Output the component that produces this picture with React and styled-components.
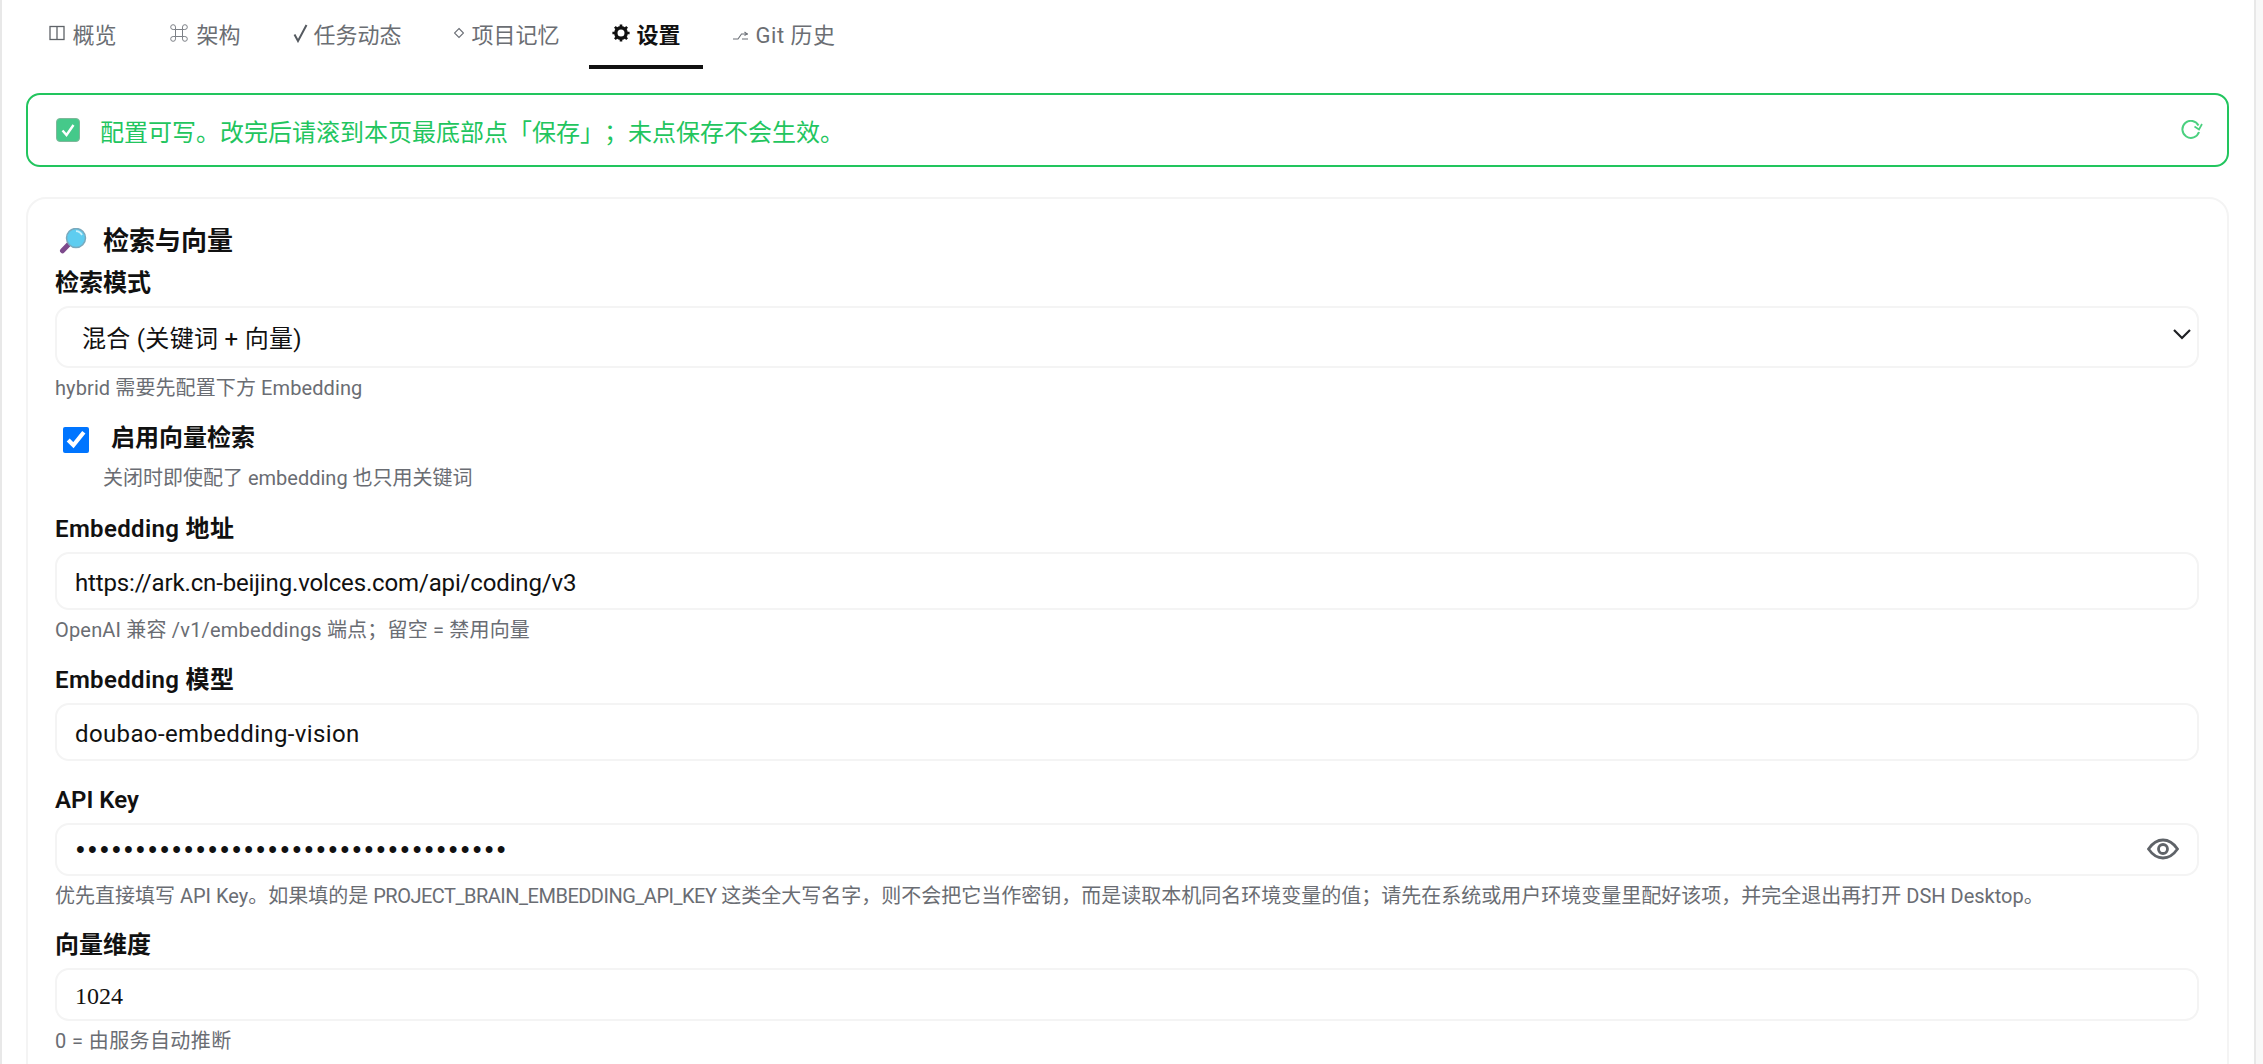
import React from 'react';
import styled, { createGlobalStyle } from 'styled-components';

const GlobalStyle = createGlobalStyle`
  html, body {
    margin: 0;
    height: 100%;
    overflow: hidden;
    background: #fff;
    font-family: Roboto, "Noto Sans CJK SC", sans-serif;
    text-spacing-trim: space-all;
    color: #111;
  }
`;

const Page = styled.div`
  display: flex;
  width: 2263px;
  height: 1064px;
  overflow: hidden;
`;

const SideEdge = styled.div`
  flex: none;
  width: 2px;
  background: #e8e8e8;
`;

const Main = styled.main`
  flex: 1;
  min-width: 0;
  padding: 0 25px 0 24px;
`;

const ScrollTrack = styled.div`
  flex: none;
  width: 9px;
  background: #f8f8f8;
  border-left: 2px solid #e8e8e8;
  box-sizing: border-box;
`;

const Tabs = styled.nav`
  display: flex;
  gap: 7px;
`;

const Tab = styled.div`
  display: flex;
  align-items: center;
  gap: ${({ $gap }) => $gap || 8}px;
  height: 69px;
  box-sizing: border-box;
  padding: 0 22.5px;
  border-bottom: 4px solid ${({ $active }) => ($active ? '#111' : 'transparent')};
  color: ${({ $active }) => ($active ? '#111' : '#6b6e73')};
  font-size: 22px;
  font-weight: ${({ $active }) => ($active ? 700 : 400)};
  letter-spacing: ${({ $track }) => $track || 0}px;
  white-space: nowrap;
`;

const Notice = styled.div`
  display: flex;
  align-items: center;
  height: 74px;
  box-sizing: border-box;
  margin-top: 24px;
  padding: 0 24px 0 28px;
  border: 2px solid #22c55e;
  border-radius: 14px;
  color: #22c55e;
  font-size: 24px;
`;

const NoticeText = styled.span`
  flex: 1;
  margin-left: 20px;
`;

const Card = styled.section`
  margin-top: 30px;
  padding: 25px 28px 40px 27px;
  border: 2px solid #f4f4f4;
  border-radius: 20px;
`;

const CardTitle = styled.h2`
  display: flex;
  align-items: center;
  gap: 16px;
  margin: 0 0 8px 4px;
  font-size: 26px;
  line-height: 34px;
  font-weight: 700;
`;

const Field = styled.div`
  display: flex;
  flex-direction: column;
  gap: 6px;
  margin-top: ${({ $top }) => $top || 0}px;
`;

const Label = styled.label`
  font-size: 24px;
  line-height: 34px;
  font-weight: 600;
  letter-spacing: ${({ $track }) => $track || 0}px;
`;

const Hint = styled.div`
  color: #6a6d73;
  font-size: 20px;
  line-height: 28px;
  white-space: nowrap;
  letter-spacing: ${({ $track }) => $track || 0}px;
  margin-left: ${({ $indent }) => $indent || 0}px;
`;

const EnvName = styled.span`
  letter-spacing: -0.5px;
`;

const Control = styled.div`
  position: relative;
`;

const TextInput = styled.input`
  display: block;
  width: 100%;
  height: ${({ $h }) => $h}px;
  box-sizing: border-box;
  padding: 4px 18px 0;
  border: 2px solid #f4f4f4;
  border-radius: 14px;
  background: #fff;
  color: #111;
  font-family: ${({ $serif }) => ($serif ? '"Liberation Serif", serif' : 'inherit')};
  font-size: 24px;
  letter-spacing: ${({ $track }) => $track || 0}px;
  outline: none;
`;

const SecretInput = styled(TextInput)`
  padding: 0 19px;
  font-family: "Liberation Sans", sans-serif;
  font-size: 25px;
  letter-spacing: 3.27px;
`;

const ModeSelect = styled.select`
  display: block;
  width: 100%;
  height: 62px;
  box-sizing: border-box;
  padding: 4px 25px 0;
  border: 2px solid #f4f4f4;
  border-radius: 14px;
  background: #fff;
  color: #111;
  font-family: inherit;
  font-size: 24px;
  letter-spacing: 0.3px;
  appearance: none;
  outline: none;
`;

const Chevron = styled.svg`
  position: absolute;
  right: 8px;
  top: 22px;
  pointer-events: none;
`;

const EyeIcon = styled.svg`
  position: absolute;
  right: 19px;
  top: 9px;
`;

const CheckRow = styled.div`
  display: flex;
  align-items: center;
  gap: 22px;
  margin-top: 19px;
  padding-left: 8px;
  font-size: 24px;
  line-height: 34px;
  font-weight: 600;
`;

const Check = styled.input`
  width: 26px;
  height: 26px;
  margin: 4px 0 0;
  accent-color: #0075ff;
`;

const Dots = '••••••••••••••••••••••••••••••••••••';

const LayoutGlyph = () => (
  <svg width="16" height="16" viewBox="0 0 16 16" fill="none" stroke="#5f6368" strokeWidth="1.3">
    <rect x="1" y="1.5" width="14" height="13" />
    <path d="M8 1.5v13" />
  </svg>
);

const CommandGlyph = () => (
  <svg width="20" height="20" viewBox="0 0 20 20" fill="none" stroke="#7c8086" strokeWidth="1">
    <path d="M6.5 6.5h7v7h-7zM6.5 6.5H4.2a2.4 2.4 0 1 1 2.3-2.4zM13.5 6.5V4.1a2.4 2.4 0 1 1 2.3 2.4zM13.5 13.5h2.3a2.4 2.4 0 1 1-2.3 2.4zM6.5 13.5v2.4a2.4 2.4 0 1 1-2.3-2.4z" />
  </svg>
);

const CheckGlyph = () => (
  <svg width="15" height="20" viewBox="0 0 15 20" fill="none" stroke="#555a60" strokeWidth="2">
    <path d="M1.5 11.5 5 18 13.5 2" />
  </svg>
);

const DiamondGlyph = () => (
  <svg width="10" height="20" viewBox="0 0 10 20" fill="none" stroke="#6b6f76" strokeWidth="1.1">
    <path d="M5 5.5 9.5 10 5 14.5.5 10z" />
  </svg>
);

const GearGlyph = () => (
  <svg width="18" height="20" viewBox="0 0 18 18" fill="none" stroke="#111">
    <circle cx="9" cy="9" r="5.200" strokeWidth="3.400" />
    <path d="M9 .4v3M9 14.600v3M.4 9h3M14.600 9h3M2.900 2.900l2 2M13.100 13.100l2 2M15.100 2.900l-2 2M4.900 13.100l-2 2" strokeWidth="2.600" />
  </svg>
);

const BranchGlyph = () => (
  <svg width="15" height="20" viewBox="0 0 15 20" fill="none" stroke="#6b6f76" strokeWidth="1.1">
    <path d="M0 16h5l3.500-5H15M9 16h6" />
    <path d="m11.500 9 2.500 2-2.500 1.500" />
  </svg>
);

const CheckEmoji = () => (
  <svg width="24" height="24" viewBox="0 0 24 24">
    <rect x="0.5" y="0.5" width="23" height="23" rx="3.500" fill="#45c98a" />
    <rect x="0.5" y="0.5" width="23" height="23" rx="3.500" fill="none" stroke="#7fb89a" />
    <path d="m6.500 12.500 4 4.500 7-10" fill="none" stroke="#fff" strokeWidth="2.400" />
  </svg>
);

const RefreshIcon = () => (
  <svg width="22" height="20" viewBox="0 0 22 20" fill="none" stroke="#4ad07f" strokeWidth="2">
    <path d="M17.500 5.500A8.500 8.500 0 1 0 18 12" />
    <path d="m21 4-3 5.500-4.500-3" strokeWidth="1.700" />
  </svg>
);

const SearchEmoji = () => (
  <svg width="28" height="26" viewBox="0 0 28 26">
    <path d="M9.500 16.500 3.500 22.800" stroke="#7d4a8c" strokeWidth="5" strokeLinecap="round" />
    <circle cx="17" cy="10" r="9.500" fill="#5ecdf0" stroke="#7aa9bd" strokeWidth="1.500" />
    <path d="M17 3.200a7 7 0 0 1 6 3.800" stroke="#c9f1fb" strokeWidth="1.800" fill="none" />
  </svg>
);

const App = () => {
  return (
    <Page>
      <GlobalStyle />
      <SideEdge />
      <Main>
        <Tabs>
          <Tab><LayoutGlyph />概览</Tab>
          <Tab><CommandGlyph />架构</Tab>
          <Tab $gap={6}><CheckGlyph />任务动态</Tab>
          <Tab><DiamondGlyph />项目记忆</Tab>
          <Tab $active $gap={7}><GearGlyph />设置</Tab>
          <Tab $track={0.5}><BranchGlyph />Git 历史</Tab>
        </Tabs>

        <Notice>
          <CheckEmoji />
          <NoticeText>配置可写。改完后请滚到本页最底部点「保存」；未点保存不会生效。</NoticeText>
          <RefreshIcon />
        </Notice>

        <Card>
          <CardTitle><SearchEmoji />检索与向量</CardTitle>

          <Field>
            <Label>检索模式</Label>
            <Control>
              <ModeSelect defaultValue="hybrid">
                <option value="hybrid">混合 (关键词 + 向量)</option>
              </ModeSelect>
              <Chevron width="18" height="12" viewBox="0 0 18 12" fill="none" stroke="#1f2024" strokeWidth="2.200">
                <path d="m1 2 8 8 8-8" />
              </Chevron>
            </Control>
            <Hint $track={0.1}>hybrid 需要先配置下方 Embedding</Hint>
          </Field>

          <CheckRow>
            <Check type="checkbox" defaultChecked />
            启用向量检索
          </CheckRow>
          <Field $top={9}>
            <Hint $indent={48}>关闭时即使配了 embedding 也只用关键词</Hint>
          </Field>

          <Field $top={20}>
            <Label $track={0.35}>Embedding 地址</Label>
            <TextInput $h={58} $track={-0.15} readOnly value="https://ark.cn-beijing.volces.com/api/coding/v3" />
            <Hint $track={0.18}>OpenAI 兼容 /v1/embeddings 端点；留空 = 禁用向量</Hint>
          </Field>

          <Field $top={19}>
            <Label $track={0.35}>Embedding 模型</Label>
            <TextInput $h={58} $track={0.37} readOnly value="doubao-embedding-vision" />
          </Field>

          <Field $top={22}>
            <Label>API Key</Label>
            <Control>
              <SecretInput $h={53} type="password" readOnly value={Dots} />
              <EyeIcon width="34" height="34" viewBox="0 0 34 34" fill="none" stroke="#5f6368" strokeWidth="2.800">
                <path d="M2.500 17C7 10.500 12 8 17 8s10 2.500 14.500 9C27 23.500 22 26 17 26S7 23.500 2.500 17z" />
                <circle cx="17" cy="17" r="4.500" />
              </EyeIcon>
            </Control>
            <Hint>优先直接填写 API Key。如果填的是 <EnvName>PROJECT_BRAIN_EMBEDDING_API_KEY</EnvName> 这类全大写名字，则不会把它当作密钥，而是读取本机同名环境变量的值；请先在系统或用户环境变量里配好该项，并完全退出再打开 DSH Desktop。</Hint>
          </Field>

          <Field $top={18}>
            <Label>向量维度</Label>
            <TextInput $h={53} $serif readOnly value="1024" />
            <Hint $track={0.4}>0 = 由服务自动推断</Hint>
          </Field>
        </Card>
      </Main>
      <ScrollTrack />
    </Page>
  );
};

export default App;
